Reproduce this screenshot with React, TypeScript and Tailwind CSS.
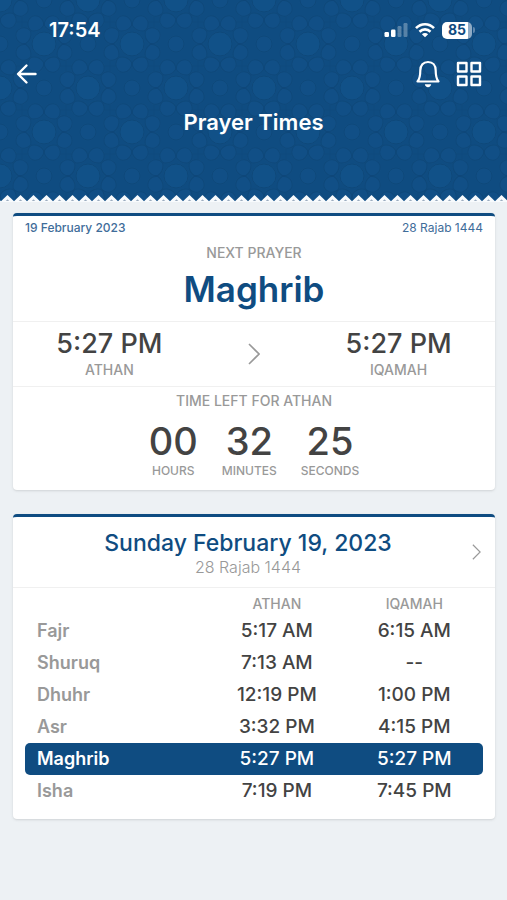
import React from "react";

interface Prayer {
  name: string;
  athan: string;
  iqamah: string;
}

const prayers: Prayer[] = [
  { name: "Fajr", athan: "5:17 AM", iqamah: "6:15 AM" },
  { name: "Shuruq", athan: "7:13 AM", iqamah: "--" },
  { name: "Dhuhr", athan: "12:19 PM", iqamah: "1:00 PM" },
  { name: "Asr", athan: "3:32 PM", iqamah: "4:15 PM" },
  { name: "Maghrib", athan: "5:27 PM", iqamah: "5:27 PM" },
  { name: "Isha", athan: "7:19 PM", iqamah: "7:45 PM" },
];

const countdown = [
  { value: "00", unit: "HOURS" },
  { value: "32", unit: "MINUTES" },
  { value: "25", unit: "SECONDS" },
];

const nextPrayer = "Maghrib";

// One rosette of the header pattern, centred on 0,0
const Rosette: React.FC = () => (
  <g>
    <circle r="12" fill="#12558c" />
    {[0, 45, 90, 135, 180, 225, 270, 315].map((angle) => (
      <g key={angle} transform={`rotate(${angle + 22.5})`}>
        <path d="M-6.500 -17Q0 -13 6.500 -17Q9.500 -22 6 -27Q0 -33 -6 -27Q-9.500 -22 -6.500 -17Z" fill="#115188" />
      </g>
    ))}
  </g>
);

const HeaderPattern: React.FC = () => (
  <svg className="absolute inset-0 h-full w-full" aria-hidden="true">
    <defs>
      <pattern id="rosettes" width="88" height="88" patternUnits="userSpaceOnUse">
        <g fill="none" stroke="#0c4475" strokeWidth="1" opacity="0.6">
          <path d="M0 22H88M0 66H88M22 0V88M66 0V88" opacity="0.5" />
          {[
            [0, 0],
            [88, 0],
            [0, 88],
            [88, 88],
            [44, 44],
          ].map(([x, y]) => (
            <g key={`${x}-${y}`} transform={`translate(${x} ${y})`}>
              <Rosette />
            </g>
          ))}
          <g fill="#115188">
            <circle cx="44" cy="0" r="8" />
            <circle cx="44" cy="88" r="8" />
            <circle cx="0" cy="44" r="8" />
            <circle cx="88" cy="44" r="8" />
          </g>
        </g>
      </pattern>
    </defs>
    <rect width="100%" height="100%" fill="url(#rosettes)" />
  </svg>
);

const ZigZag: React.FC = () => (
  <svg className="absolute bottom-0 left-0 h-[7px] w-full" aria-hidden="true">
    <defs>
      <pattern id="teeth" x="1" width="13" height="7" patternUnits="userSpaceOnUse">
        <path d="M0 6.200L6.500 0L13 6.200V7H0Z" fill="#f8fbfd" />
        <path d="M4.800 5.800L6.500 4.400L8.200 5.800Z" fill="#7d93ab" />
      </pattern>
    </defs>
    <rect width="100%" height="7" fill="url(#teeth)" />
  </svg>
);

const StatusBar: React.FC = () => (
  <div className="flex h-5 items-center justify-between pr-8 pl-[49px]">
    <span className="text-xl leading-5 font-semibold">17:54</span>
    <div className="flex items-center gap-[7px]">
      <svg width="24" height="16" viewBox="0 0 24 16" fill="#fff" aria-hidden="true">
        <rect x="0.500" y="10" width="4.500" height="5" rx="1.200" />
        <rect x="7" y="7.500" width="4.500" height="7.500" rx="1.200" />
        <rect x="13.500" y="4" width="4" height="11" rx="1.200" opacity="0.3" />
        <rect x="19.500" y="1" width="4" height="14" rx="1.200" opacity="0.3" />
      </svg>
      <svg width="20" height="16" viewBox="0 0 20 16" fill="none" stroke="#fff" strokeWidth="2.600" aria-hidden="true">
        <path d="M1 6.200C6 1 14 1 19 6.200" />
        <path d="M4.500 9.700C7.700 6.600 12.300 6.600 15.500 9.700" />
        <path d="M10 15.200L6.900 12.200C8.700 10.700 11.300 10.700 13.100 12.200Z" fill="#fff" stroke="none" />
      </svg>
      <div className="flex items-center gap-px">
        <div className="flex h-[17px] w-[30px] items-center justify-center rounded-[5px] bg-linear-to-r from-white from-86% to-[#8fabc5] to-86% text-sm leading-4 font-bold text-[#0f4c81]">
          85
        </div>
        <div className="h-1.5 w-0.5 rounded-r-full bg-[#5f87ae]" />
      </div>
    </div>
  </div>
);

const Header: React.FC = () => (
  <header className="relative bg-[#0f4c81] pb-16 text-white">
    <HeaderPattern />
    <div className="relative pt-5">
      <StatusBar />
      <nav className="mt-5 flex h-7 items-center justify-between pr-[25px] pl-4">
        <button type="button" aria-label="Back">
          <svg width="22" height="22" viewBox="0 0 22 22" fill="none" stroke="currentColor" strokeWidth="2.400" strokeLinecap="round" strokeLinejoin="round">
            <path d="M19.500 11H2.500M10.500 2.500L2 11L10.500 19.500" />
          </svg>
        </button>
        <div className="flex items-center gap-[15px]">
          <button type="button" aria-label="Notifications">
            <svg width="26" height="28" viewBox="0 0 26 28" fill="none" stroke="currentColor" strokeWidth="2.200" strokeLinejoin="round">
              <path d="M2.500 21.500C5 18.500 5.300 15.500 5.300 10.500C5.300 5.300 8.300 2 13 2C17.700 2 20.700 5.300 20.700 10.500C20.700 15.500 21 18.500 23.500 21.500Z" />
              <path d="M9.800 24.300H16.200C15.900 26 14.700 27.200 13 27.200C11.300 27.200 10.100 26 9.800 24.300Z" fill="currentColor" stroke="none" />
            </svg>
          </button>
          <button type="button" aria-label="Menu">
            <svg width="26" height="26" viewBox="0 0 26 26" fill="none" stroke="currentColor" strokeWidth="2.400" strokeLinejoin="round">
              <rect x="2" y="2" width="8.500" height="8.500" />
              <rect x="15.500" y="2" width="8.500" height="8.500" />
              <rect x="2" y="15.500" width="8.500" height="8.500" />
              <rect x="15.500" y="15.500" width="8.500" height="8.500" />
            </svg>
          </button>
        </div>
      </nav>
      <h1 className="mt-[18px] text-center text-[22px] leading-8 font-semibold">Prayer Times</h1>
    </div>
    <ZigZag />
  </header>
);

const Chevron: React.FC<{ className: string }> = ({ className }) => (
  <svg className={className} viewBox="0 0 12 22" fill="none" stroke="currentColor" strokeWidth="1.600" aria-hidden="true">
    <path d="M1 1L11 11L1 21" />
  </svg>
);

const TimeBlock: React.FC<{ time: string; label: string }> = ({ time, label }) => (
  <div className="text-center">
    <p className="text-[27px] leading-8 font-medium text-[#434343]">{time}</p>
    <p className="text-sm leading-5 font-medium">{label}</p>
  </div>
);

const NextPrayerCard: React.FC = () => (
  <section className="rounded-[4px] border-t-3 border-[#0f4c81] bg-white text-[#999] shadow-sm">
    <div className="border-b border-[#f0f0f0] pb-2.5">
      <div className="flex justify-between px-3 pt-1 text-xs leading-4 text-[#3f6d9a]">
        <span className="font-medium">19 February 2023</span>
        <span>28 Rajab 1444</span>
      </div>
      <p className="mt-[7px] text-center text-sm leading-5 font-medium">NEXT PRAYER</p>
      <h2 className="mt-1 text-center text-[35px] leading-11 font-semibold text-[#0f4c81]">{nextPrayer}</h2>
    </div>
    <div className="grid grid-cols-[2fr_1fr_2fr] items-center border-b border-[#f0f0f0] py-[6px]">
      <TimeBlock time="5:27 PM" label="ATHAN" />
      <Chevron className="h-[22px] w-3 justify-self-center" />
      <TimeBlock time="5:27 PM" label="IQAMAH" />
    </div>
    <div className="pt-1 pb-[11px] text-center">
      <p className="text-sm leading-5 font-medium">TIME LEFT FOR ATHAN</p>
      <div className="mt-2 flex justify-center gap-6">
        {countdown.map(({ value, unit }) => (
          <div key={unit}>
            <p className="text-[38px] leading-11 font-medium text-[#434343]">{value}</p>
            <p className="text-xs leading-4 font-medium">{unit}</p>
          </div>
        ))}
      </div>
    </div>
  </section>
);

const TimetableCard: React.FC = () => (
  <section className="rounded-[4px] border-t-3 border-[#0f4c81] bg-white pb-3 text-[#999] shadow-sm">
    <div className="relative border-b border-[#f0f0f0] pt-2.5 pr-3 pb-3 text-center">
      <h2 className="text-[23px] leading-8 font-medium text-[#0f4c81]">Sunday February 19, 2023</h2>
      <p className="text-base leading-4 font-light">28 Rajab 1444</p>
      <button type="button" aria-label="Next day" className="absolute top-1/2 right-3.5 -translate-y-1/2">
        <Chevron className="h-4 w-[9px]" />
      </button>
    </div>
    <div className="px-3">
      <table className="w-full table-fixed text-center font-medium">
        <thead className="text-sm leading-5">
          <tr className="align-top">
            <th className="w-2/5" />
            <th className="w-3/10 pt-1.5 pb-px font-medium">ATHAN</th>
            <th className="w-3/10 pt-1.5 pb-px font-medium">IQAMAH</th>
          </tr>
        </thead>
        <tbody className="text-[19px] leading-8 text-[#434343]">
          {prayers.map(({ name, athan, iqamah }) => (
            <tr key={name} className={name === nextPrayer ? "bg-[#0f4c81] text-white" : ""}>
              <th
                scope="row"
                className={
                  name === nextPrayer
                    ? "rounded-l-[5px] pl-3 text-left text-lg leading-8 font-semibold"
                    : "pl-3 text-left text-lg leading-8 font-semibold text-[#999]"
                }
              >
                {name}
              </th>
              <td>{athan}</td>
              <td className="rounded-r-[5px]">{iqamah}</td>
            </tr>
          ))}
        </tbody>
      </table>
    </div>
  </section>
);

const App: React.FC = () => (
  <div className="min-h-screen bg-[#edf1f4] font-['Inter',sans-serif]">
    <Header />
    <main className="flex flex-col gap-6 pt-[11px] pr-3 pb-6 pl-[13px]">
      <NextPrayerCard />
      <TimetableCard />
    </main>
  </div>
);

export default App;
